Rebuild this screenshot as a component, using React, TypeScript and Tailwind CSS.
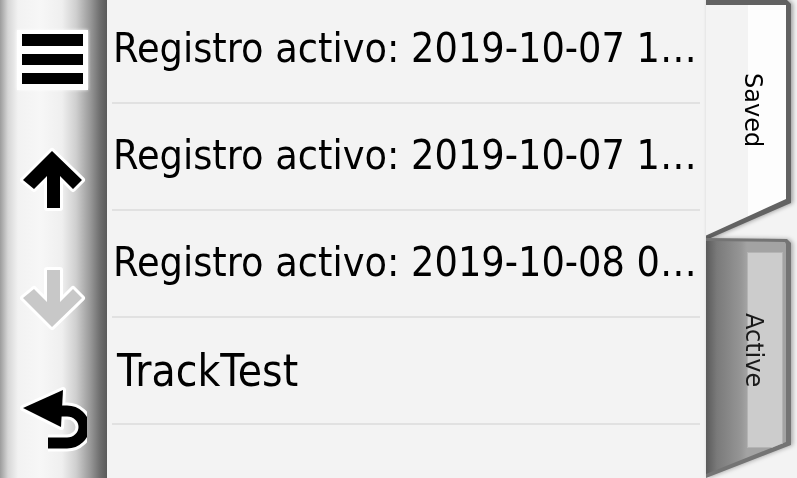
import React from "react";

const rows = [
  { label: "Registro activo: 2019-10-07 1…", cls: "pl-[1px] text-[36.8px]" },
  { label: "Registro activo: 2019-10-07 1…", cls: "pl-[1px] text-[36.8px]" },
  { label: "Registro activo: 2019-10-08 0…", cls: "pl-[1px] text-[36.8px]" },
  { label: "TrackTest", cls: "pl-[5px] text-[39.5px]" },
];

function MenuIcon() {
  return (
    <div className="flex w-[71px] flex-col gap-[8px] bg-white px-[5px] pt-[4px] pb-[6px] shadow-[0_0_3px_rgba(255,255,255,0.9)]">
      <div className="h-[12px] bg-black" />
      <div className="h-[11px] bg-black" />
      <div className="h-[11px] bg-black" />
    </div>
  );
}

function UpIcon() {
  return (
    <svg width="70" height="70" viewBox="0 0 70 70">
      <path
        d="M35 6 L65 35 L56 44 L43 31 L43 63 L30 63 L30 31 L17 44 L6 35 Z"
        fill="#000"
        stroke="#fff"
        strokeWidth="6"
        strokeLinejoin="round"
        paintOrder="stroke"
      />
    </svg>
  );
}

function DownIcon() {
  return (
    <svg width="70" height="70" viewBox="0 0 70 70">
      <path
        d="M30 5 L43 5 L43 37 L56 24 L65 33 L35 62 L6 33 L17 24 L30 37 Z"
        fill="#c8c8c8"
        stroke="#fff"
        strokeWidth="6"
        strokeLinejoin="round"
        paintOrder="stroke"
      />
    </svg>
  );
}

function BackIcon() {
  return (
    <svg width="70" height="70" viewBox="0 0 70 70">
      <g stroke="#fff" strokeLinejoin="round">
        <path d="M6 23 L46 5 L44 42 Z" fill="#fff" strokeWidth="6" />
        <path d="M43 26 L50 26 A17 16 0 0 1 50 58 L31 58" fill="none" strokeWidth="17" />
      </g>
      <path d="M43 26 L50 26 A17 16 0 0 1 50 58 L31 58" fill="none" stroke="#000" strokeWidth="11" />
      <path d="M6 23 L46 5 L44 42 Z" fill="#000" />
    </svg>
  );
}

export default function App() {
  const font = { fontFamily: '"DejaVu Sans", "Liberation Sans", sans-serif' };

  return (
    <div className="flex h-[478px] w-[797px] overflow-hidden bg-[#f3f3f3]" style={font}>
      <aside className="w-[107px] shrink-0 bg-[linear-gradient(to_right,#9c9c9c_0px,#d6d6d6_8px,#f2f2f2_18px,#f7f7f7_40px,#efefef_62px,#cfcfcf_76px,#9a9a9a_90px,#6e6e6e_100px,#5a5a5a_107px)]">
        <div className="flex w-[104px] flex-col">
          <div className="flex h-[120px] items-center justify-center">
            <MenuIcon />
          </div>
          <div className="flex h-[120px] items-center justify-center">
            <UpIcon />
          </div>
          <div className="flex h-[120px] items-center justify-center">
            <DownIcon />
          </div>
          <div className="flex h-[120px] items-center justify-center">
            <BackIcon />
          </div>
        </div>
      </aside>

      <main className="-mt-[3px] flex w-[598px] shrink-0 flex-col px-[5px]">
        {rows.map((row, i) => (
          <div key={i} className="flex h-[107px] shrink-0 items-center border-b-2 border-[#e1e1e1]">
            <span className={`${row.cls} block scale-y-112 whitespace-nowrap leading-none text-black`}>
              {row.label}
            </span>
          </div>
        ))}
      </main>

      <section className="flex w-[92px] shrink-0 flex-col">
        <div className="h-[238px] drop-shadow-[2px_0_2px_rgba(0,0,0,0.35)]">
          <div className="h-full bg-[#626262] [clip-path:polygon(1px_0,82px_0,86px_4px,86px_203px,1px_240px)]">
            <div className="flex h-full items-center justify-center bg-[linear-gradient(to_right,#f3f3f3_0px,#f3f3f3_43px,#fdfdfd_43px)] pb-[18px] pl-[4px] [clip-path:polygon(0_5px,81px_5px,81px_199px,0_236px)]">
              <span className="text-[24px] leading-none text-black [writing-mode:vertical-rl]">
                Saved
              </span>
            </div>
          </div>
        </div>
        <div className="h-[240px] drop-shadow-[2px_0_2px_rgba(0,0,0,0.3)]">
          <div className="h-full bg-[#747474] [clip-path:polygon(1px_0,82px_1px,86px_5px,86px_207px,1px_240px)]">
            <div className="relative flex h-full items-center justify-center bg-[linear-gradient(to_right,#575757_0px,#7a7a7a_12px,#969696_36px,#a3a3a3_42px)] pb-[16px] pl-[6px] [clip-path:polygon(1px_3px,80px_4px,81px_6px,81px_204px,1px_236px)]">
              <div className="absolute top-[14px] left-[42px] h-[196px] w-[36px] border border-[#b4b4b4] bg-[#cccccc]" />
              <span className="relative text-[24px] leading-none text-[#1a1a1a] [writing-mode:vertical-rl]">
                Active
              </span>
            </div>
          </div>
        </div>
      </section>
    </div>
  );
}
